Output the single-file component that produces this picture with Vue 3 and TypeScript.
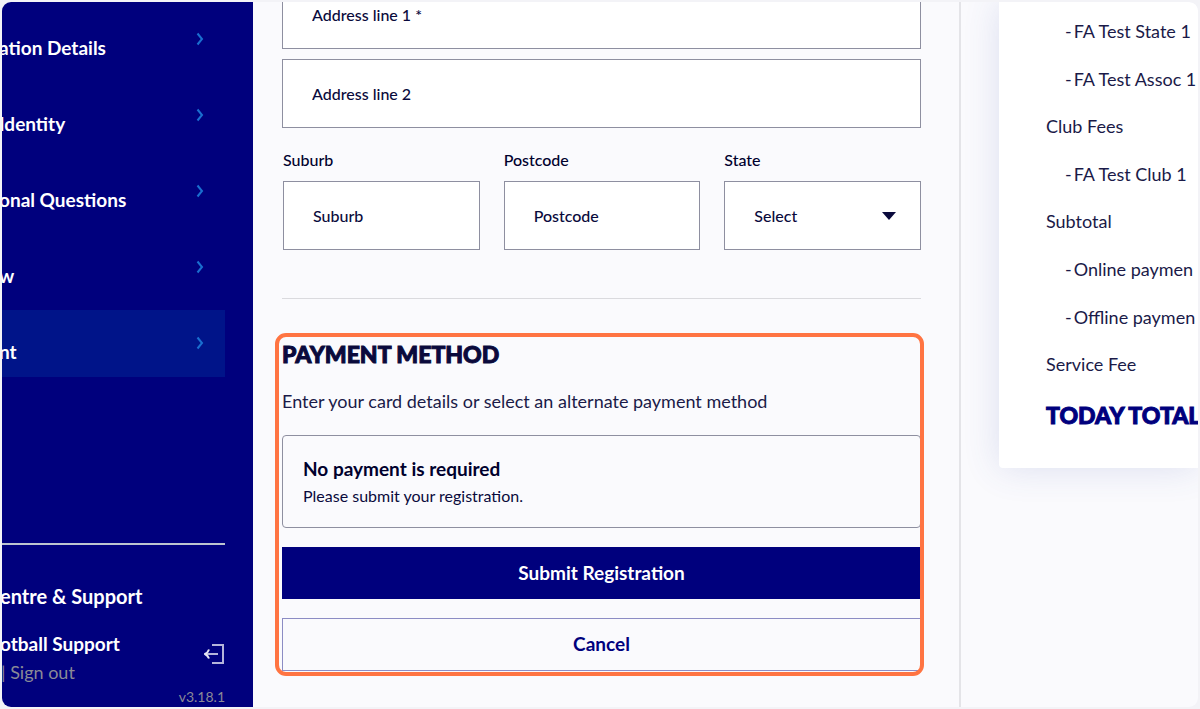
<script setup lang="ts">
import { ref } from 'vue'

interface Step {
  label: string
  active?: boolean
}

interface FeeLine {
  label: string
  sub?: boolean
}

const steps: Step[] = [
  { label: 'ation Details' },
  { label: 'Identity' },
  { label: 'onal Questions' },
  { label: 'w' },
  { label: 'nt', active: true },
]

const fees: FeeLine[] = [
  { label: 'FA Test State 1', sub: true },
  { label: 'FA Test Assoc 1', sub: true },
  { label: 'Club Fees' },
  { label: 'FA Test Club 1', sub: true },
  { label: 'Subtotal' },
  { label: 'Online paymen', sub: true },
  { label: 'Offline paymen', sub: true },
  { label: 'Service Fee' },
]

const address1 = ref('')
const address2 = ref('')
const suburb = ref('')
const postcode = ref('')
const state = ref('Select')
</script>

<template>
  <div class="page">
    <div class="frame">
      <aside class="sidebar">
        <nav class="steps">
          <a v-for="s in steps" :key="s.label" href="#" class="step" :class="{ active: s.active }">
            <span class="step-label">{{ s.label }}</span>
            <svg class="chevron" viewBox="0 0 8 14" aria-hidden="true">
              <path d="M1.5 1.5 L6 7 L1.5 12.5" />
            </svg>
          </a>
        </nav>
        <footer class="side-foot">
          <a href="#" class="help">entre &amp; Support</a>
          <div class="account">
            <div>
              <a href="#" class="user">otball Support</a>
              <div class="signout"><span class="bar">|</span> <a href="#">Sign out</a></div>
            </div>
            <button class="exit" type="button" aria-label="Sign out">
              <svg viewBox="0 0 20 20" aria-hidden="true">
                <path d="M8 1 H19 V19 H8" />
                <path d="M1.5 10 H14" />
                <path class="head" d="M5 5.5 Q4 8.5 1 10 Q4 11.5 5 14.5" />
              </svg>
            </button>
          </div>
          <div class="version">v3.18.1</div>
        </footer>
      </aside>

      <main class="main">
        <form class="address" @submit.prevent>
          <input v-model="address1" class="field" placeholder="Address line 1 *" aria-label="Address line 1" />
          <input v-model="address2" class="field" placeholder="Address line 2" aria-label="Address line 2" />
          <div class="trio">
            <div class="cell">
              <label for="suburb">Suburb</label>
              <input id="suburb" v-model="suburb" class="field" placeholder="Suburb" />
            </div>
            <div class="cell">
              <label for="postcode">Postcode</label>
              <input id="postcode" v-model="postcode" class="field" placeholder="Postcode" />
            </div>
            <div class="cell">
              <label for="state">State</label>
              <div class="select">
                <select id="state" v-model="state" class="field">
                  <option>Select</option>
                </select>
                <svg class="caret" viewBox="0 0 14 8" aria-hidden="true"><path d="M0 0 H14 L7 8 Z" /></svg>
              </div>
            </div>
          </div>
        </form>

        <section class="payment">
          <h2>Payment method</h2>
          <p class="intro">Enter your card details or select an alternate payment method</p>
          <div class="notice">
            <h3>No payment is required</h3>
            <p>Please submit your registration.</p>
          </div>
          <button class="btn primary" type="button">Submit Registration</button>
          <button class="btn secondary" type="button">Cancel</button>
          <div class="highlight"></div>
        </section>
      </main>

      <aside class="summary">
        <div class="card">
          <ul>
            <li v-for="f in fees" :key="f.label" :class="{ sub: f.sub }">
              <span v-if="f.sub">-</span>
              <span>{{ f.label }}</span>
            </li>
          </ul>
          <div class="total">TODAY TOTAL</div>
        </div>
      </aside>
    </div>
  </div>
</template>

<style>
html,
body {
  margin: 0;
  overflow: hidden;
}
</style>

<style scoped>
* {
  box-sizing: border-box;
}
.page {
  height: 100vh;
  padding: 2px;
  background: #f3f3f7;
  font-family: Lato, 'Open Sans', sans-serif;
  color: #0a0a3c;
}
.frame {
  height: 100%;
  display: grid;
  grid-template-columns: 251px minmax(0, 1fr) 237px;
  overflow: hidden;
  border-radius: 9px;
  background: #fafafd;
}
a {
  color: inherit;
  text-decoration: none;
}
h2,
h3,
p,
ul {
  margin: 0;
  padding: 0;
}

/* sidebar */
.sidebar {
  display: flex;
  flex-direction: column;
  justify-content: space-between;
  padding: 4px 28px 0 0;
  overflow: hidden;
  background: #00007d;
  color: #fff;
}
.steps {
  display: flex;
  flex-direction: column;
  gap: 9px;
}
.step {
  display: flex;
  justify-content: space-between;
  align-items: center;
  height: 67px;
  padding: 0 21px 2px 0;
}
.step.active {
  background: #001489;
}
.step-label {
  margin-left: -3px;
  padding-top: 18px;
  font-size: 19px;
  line-height: 24px;
  font-weight: 700;
}
.chevron {
  width: 8px;
  height: 14px;
  fill: none;
  stroke: #1a6fd0;
  stroke-width: 2;
}
.side-foot {
  border-top: 2px solid #bcc4cf;
  padding-top: 39px;
}
.help,
.user {
  display: block;
  margin-left: -2px;
  font-size: 19px;
  line-height: 24px;
  font-weight: 700;
}
.help {
  font-size: 20px;
}
.account {
  display: flex;
  justify-content: space-between;
  align-items: center;
  margin-top: 24px;
}
.signout {
  margin-left: -1px;
  font-size: 18px;
  line-height: 32px;
  color: #8a8a96;
}
.exit {
  width: 20px;
  height: 20px;
  margin: 0 1px 12px 0;
  padding: 0;
  border: 0;
  background: none;
}
.exit svg {
  display: block;
  width: 20px;
  height: 20px;
  fill: none;
  stroke: #b4b4da;
  stroke-width: 2;
}
.exit .head {
  stroke: #e6e6f5;
}
.version {
  padding-bottom: 1px;
  text-align: right;
  font-size: 14px;
  line-height: 18px;
  color: #8a8a96;
}

/* form */
.main {
  min-width: 0;
  padding: 0 38px 0 29px;
  border-right: 2px solid #e4e4e8;
}
.address {
  display: flex;
  flex-direction: column;
  gap: 10px;
  margin-top: -22px;
  padding-bottom: 48px;
  border-bottom: 1px solid #dadade;
}
.field {
  width: 100%;
  height: 69px;
  padding: 0 29px;
  border: 1px solid #8e8fa0;
  border-radius: 0;
  background: #fff;
  font: 500 16px/24px Lato, 'Open Sans', sans-serif;
  color: #0a0a3c;
  outline: none;
}
.field::placeholder {
  color: #0a0a3c;
  opacity: 1;
}
.trio {
  display: grid;
  grid-template-columns: repeat(3, minmax(0, 1fr));
  gap: 24px;
  margin-top: 10px;
  padding-left: 1px;
}
.cell label {
  display: block;
  margin-bottom: 9px;
  font-size: 16px;
  line-height: 24px;
  font-weight: 500;
  color: #00002d;
}
.select {
  position: relative;
}
select.field {
  appearance: none;
}
.caret {
  position: absolute;
  right: 25px;
  top: 31px;
  width: 14px;
  height: 8px;
  fill: #0a0a3c;
  pointer-events: none;
}

/* payment */
.payment {
  position: relative;
  display: flex;
  flex-direction: column;
  padding-top: 39px;
}
h2 {
  font-size: 23px;
  line-height: 32px;
  font-weight: 900;
  text-transform: uppercase;
  -webkit-text-stroke: 1px currentColor;
}
.intro {
  margin-top: 17px;
  font-size: 18px;
  line-height: 28px;
  color: #1a1a48;
}
.notice {
  margin-top: 20px;
  padding: 19px 20px;
  border: 1px solid #8e8fa0;
  border-radius: 4px;
}
.notice h3 {
  font-size: 19px;
  line-height: 28px;
  font-weight: 700;
  color: #00002d;
}
.notice p {
  font-size: 16px;
  line-height: 25px;
}
.btn {
  height: 52px;
  padding-bottom: 2px;
  border: 0;
  font: 700 19px/24px Lato, 'Open Sans', sans-serif;
}
.primary {
  margin-top: 19px;
  background: #00007d;
  color: #fff;
}
.secondary {
  margin-top: 19px;
  height: 53px;
  border: 1px solid #8c8cc4;
  background: transparent;
  color: #00007d;
}
.highlight {
  position: absolute;
  inset: 34px -3px -5px -7px;
  border: 4px solid #ff7442;
  border-radius: 11px;
  pointer-events: none;
}

/* summary */
.summary {
  min-width: 0;
  padding-left: 38px;
}
.card {
  padding: 5px 0 33px 47px;
  border-radius: 0 0 0 4px;
  background: #fff;
  box-shadow: 0 0 36px rgba(60, 80, 170, 0.16);
  white-space: nowrap;
  overflow: hidden;
}
.card ul {
  list-style: none;
}
.card li {
  display: flex;
  gap: 2px;
  font-size: 18px;
  line-height: 47px;
  color: #1a1a48;
}
.card li.sub {
  padding-left: 19px;
  line-height: 48px;
}
.total {
  margin-top: 7px;
  font-size: 23px;
  line-height: 40px;
  font-weight: 900;
  color: #00007d;
  -webkit-text-stroke: 1px currentColor;
}
</style>
